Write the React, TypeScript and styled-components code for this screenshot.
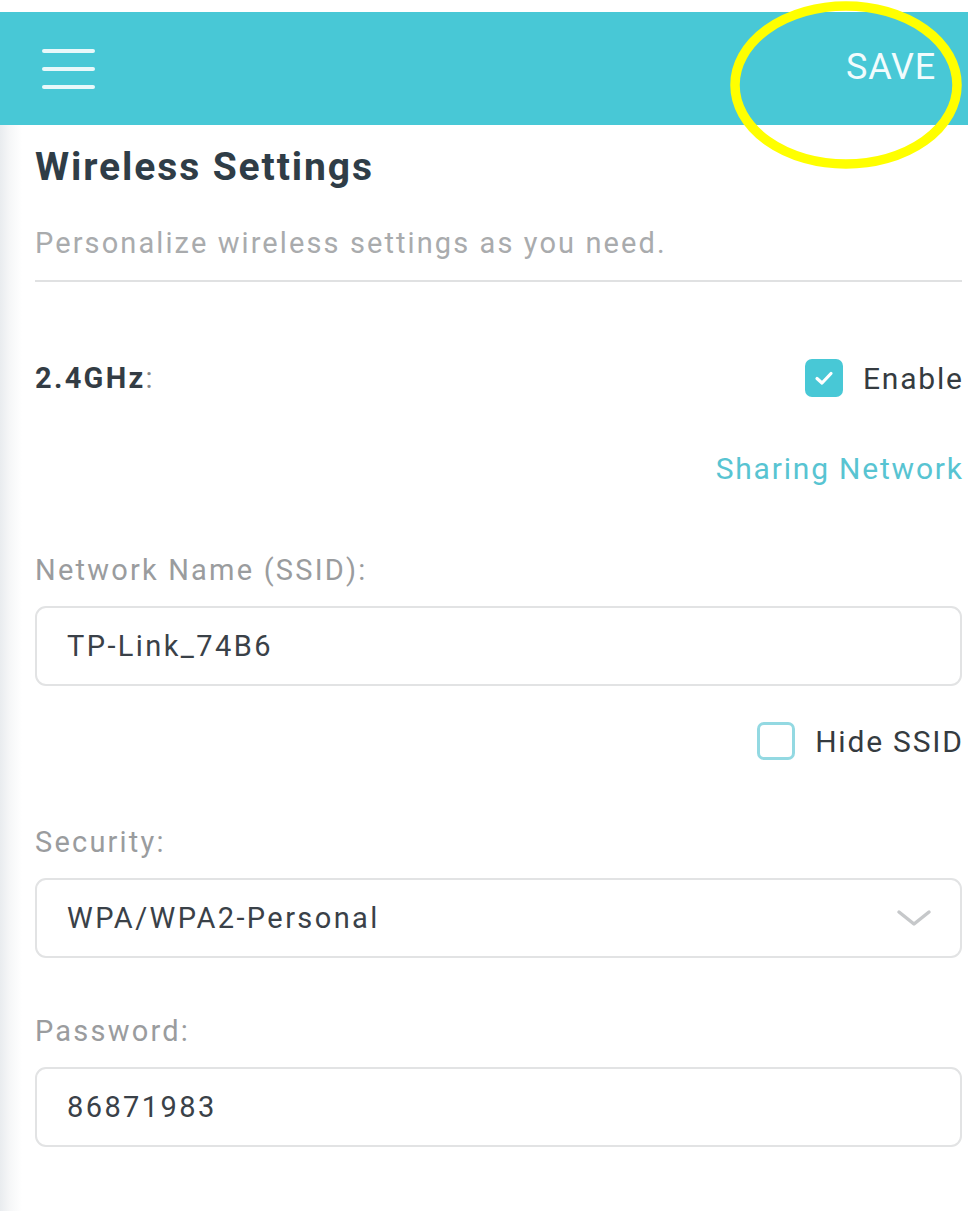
import React, { useState } from 'react';
import styled, { createGlobalStyle } from 'styled-components';

const teal = '#48c8d6';

const GlobalStyle = createGlobalStyle`
    html, body {
        margin: 0;
        padding: 0;
        background: #ffffff;
    }
    body {
        font-family: Roboto, "Liberation Sans", sans-serif;
    }
`;

const StyledPage = styled.div`
    position: relative;
    width: 968px;
    min-height: 1211px;
    padding-top: 12px;
    box-sizing: border-box;
    overflow: hidden;
`;

const StyledHeader = styled.header`
    height: 113px;
    background-color: ${teal};
    display: flex;
    align-items: center;
    justify-content: space-between;
    padding: 0 32px 0 42px;
    box-sizing: border-box;
`;

const StyledMenuButton = styled.button`
    width: 53px;
    height: 40px;
    padding: 0;
    border: 0;
    background: none;
    display: flex;
    flex-direction: column;
    justify-content: space-between;
`;

const StyledMenuLine = styled.span`
    display: block;
    height: 4px;
    border-radius: 2px;
    background-color: #e8f8fa;
`;

const StyledSaveButton = styled.button`
    border: 0;
    background: none;
    padding: 0;
    margin-top: -4px;
    color: #f2fcfd;
    font-family: Roboto, "Liberation Sans", sans-serif;
    font-size: 36px;
    letter-spacing: 0.8px;
`;

const StyledHighlight = styled.svg`
    position: absolute;
    left: 726px;
    top: 0;
    pointer-events: none;
`;

const StyledContent = styled.main`
    padding: 18px 6px 40px 35px;
    background: linear-gradient(to right, #e9ecef 0px, #f6f7f8 10px, #ffffff 22px);
    min-height: 1086px;
    box-sizing: border-box;
`;

const StyledTitle = styled.h1`
    margin: 0;
    font-size: 39px;
    font-weight: 700;
    letter-spacing: 1.9px;
    color: #2f3d47;
    line-height: 48px;
`;

const StyledSubtitle = styled.p`
    margin: 32px 0 0;
    font-size: 29px;
    letter-spacing: 2.1px;
    color: #a9abad;
    line-height: 40px;
    padding-bottom: 17px;
    border-bottom: 2px solid #e0e1e2;
`;

const StyledBandRow = styled.div`
    display: flex;
    align-items: center;
    justify-content: space-between;
    margin-top: 76px;
    height: 40px;
`;

const StyledBandLabel = styled.span`
    font-size: 29px;
    font-weight: 700;
    letter-spacing: 2.3px;
    color: #333c44;

    span {
        font-weight: 400;
        color: #888;
    }
`;

const StyledCheckLabel = styled.label`
    display: flex;
    align-items: center;
    gap: 20px;
    font-size: 30px;
    letter-spacing: 1.8px;
    margin-right: -1.8px;
    color: #353b40;
    cursor: pointer;
`;

const StyledBox = styled.span<{ $checked: boolean }>`
    width: 38px;
    height: 38px;
    box-sizing: border-box;
    border-radius: 7px;
    display: flex;
    align-items: center;
    justify-content: center;
    background-color: ${(p) => (p.$checked ? teal : '#ffffff')};
    border: ${(p) => (p.$checked ? 'none' : '3px solid #93d9e2')};
`;

const StyledLinkRow = styled.div`
    display: flex;
    justify-content: flex-end;
    margin-top: 53px;
`;

const StyledLink = styled.a`
    font-size: 30px;
    letter-spacing: 1.8px;
    margin-right: -1.8px;
    color: #58c4d2;
    text-decoration: none;
`;

const StyledField = styled.div<{ $top: number }>`
    margin-top: ${(p) => p.$top}px;
    display: flex;
    flex-direction: column;
    gap: 18px;
`;

const StyledFieldLabel = styled.label`
    font-size: 29px;
    letter-spacing: 2.2px;
    color: #9a9c9e;
    line-height: 36px;
`;

const StyledInputBox = styled.div`
    height: 80px;
    border: 2px solid #e2e3e4;
    border-radius: 11px;
    box-sizing: border-box;
    display: flex;
    align-items: center;
    justify-content: space-between;
    padding: 0 28px 0 30px;
`;

const StyledValue = styled.span`
    font-size: 29px;
    letter-spacing: 2.4px;
    color: #3a4148;
`;

const StyledHideRow = styled.div`
    display: flex;
    justify-content: flex-end;
    margin-top: 36px;
`;

const Check = (): JSX.Element => (
    <svg width="20" height="16" viewBox="0 0 20 16">
        <path d="M3 8.5 L8 13 L17 3.5" fill="none" stroke="#ffffff" strokeWidth="3.2" strokeLinecap="round" strokeLinejoin="round" />
    </svg>
);

const Chevron = (): JSX.Element => (
    <svg width="36" height="20" viewBox="0 0 36 20">
        <path d="M3 4 L18 16 L33 4" fill="none" stroke="#c6c8ca" strokeWidth="3.5" strokeLinecap="round" strokeLinejoin="round" />
    </svg>
);

const App = (): JSX.Element => {
    const [enabled, setEnabled] = useState<boolean>(true);
    const [hidden, setHidden] = useState<boolean>(false);

    return (
        <StyledPage>
            <GlobalStyle />
            <StyledHeader>
                <StyledMenuButton aria-label="menu">
                    <StyledMenuLine />
                    <StyledMenuLine />
                    <StyledMenuLine />
                </StyledMenuButton>
                <StyledSaveButton>SAVE</StyledSaveButton>
            </StyledHeader>
            <StyledContent>
                <StyledTitle>Wireless Settings</StyledTitle>
                <StyledSubtitle>Personalize wireless settings as you need.</StyledSubtitle>
                <StyledBandRow>
                    <StyledBandLabel>2.4GHz<span>:</span></StyledBandLabel>
                    <StyledCheckLabel onClick={() => setEnabled(!enabled)}>
                        <StyledBox $checked={enabled}>{enabled && <Check />}</StyledBox>
                        Enable
                    </StyledCheckLabel>
                </StyledBandRow>
                <StyledLinkRow>
                    <StyledLink href="#">Sharing Network</StyledLink>
                </StyledLinkRow>
                <StyledField $top={66}>
                    <StyledFieldLabel>Network Name (SSID):</StyledFieldLabel>
                    <StyledInputBox>
                        <StyledValue>TP-Link_74B6</StyledValue>
                    </StyledInputBox>
                </StyledField>
                <StyledHideRow>
                    <StyledCheckLabel onClick={() => setHidden(!hidden)}>
                        <StyledBox $checked={hidden}>{hidden && <Check />}</StyledBox>
                        Hide SSID
                    </StyledCheckLabel>
                </StyledHideRow>
                <StyledField $top={64}>
                    <StyledFieldLabel>Security:</StyledFieldLabel>
                    <StyledInputBox>
                        <StyledValue>WPA/WPA2-Personal</StyledValue>
                        <Chevron />
                    </StyledInputBox>
                </StyledField>
                <StyledField $top={55}>
                    <StyledFieldLabel>Password:</StyledFieldLabel>
                    <StyledInputBox>
                        <StyledValue>86871983</StyledValue>
                    </StyledInputBox>
                </StyledField>
            </StyledContent>
            <StyledHighlight width="242" height="172" viewBox="0 0 242 172">
                <ellipse cx="120" cy="85" rx="111" ry="79" fill="none" stroke="#ffff00" strokeWidth="9.5" />
            </StyledHighlight>
        </StyledPage>
    );
};

export default App;
